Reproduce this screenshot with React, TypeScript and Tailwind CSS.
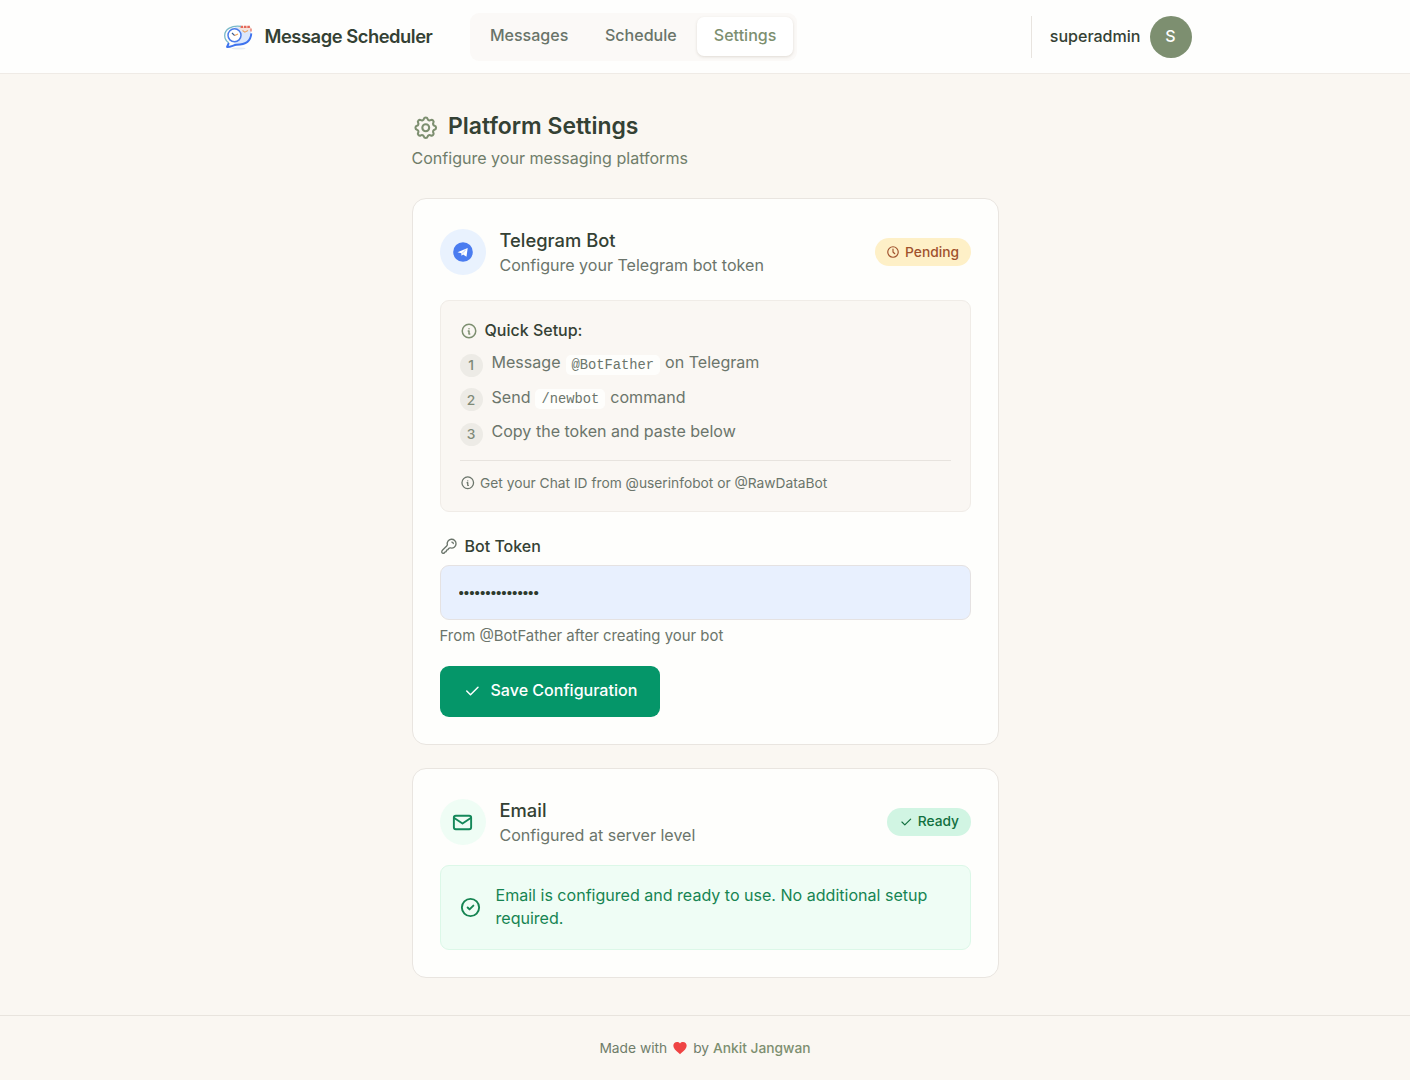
import type { ReactNode } from "react"
import {
  TbCheck,
  TbCircleCheck,
  TbClock,
  TbInfoCircle,
  TbMail,
  TbSettings,
} from "react-icons/tb"

const navItems = [
  { label: "Messages", active: false },
  { label: "Schedule", active: false },
  { label: "Settings", active: true },
]

const steps: { before: string; code?: string; after?: string }[] = [
  { before: "Message", code: "@BotFather", after: "on Telegram" },
  { before: "Send", code: "/newbot", after: "command" },
  { before: "Copy the token and paste below" },
]

function Logo() {
  return (
    <svg width="30" height="30" viewBox="0 0 30 30" fill="none" aria-hidden="true">
      <ellipse cx="15.5" cy="26.500" rx="7" ry="1" fill="#e8edf2" />
      <path
        d="M12 5h13c2.600 0 3.400 1.800 3.100 4.500l-.7 6c-.6 4.500-3.500 7.200-8 7.200h-8z"
        fill="#dbe7fc"
      />
      <path d="M15 5h13l.2 3.500H18z" fill="#f6e3dc" />
      <path d="M17.500 4.800h10" stroke="#e4695a" strokeWidth="2.200" strokeDasharray="2.600 .8" />
      <path d="M28 6.500v3" stroke="#e4695a" strokeWidth="1.200" />
      <path d="M19.500 8.500l2.300 1.700 3.200-1.700" stroke="#f0a35b" strokeWidth="1.100" />
      <path
        d="M18 4.400C8.500 3 1.700 7.500 1.700 13.400c0 3.300 1.500 5.600 4.100 7.400"
        stroke="#79b9c9"
        strokeWidth="1.300"
      />
      <path
        d="M5.800 21L4 25c4 .2 6.200-1.900 9.700-2.200 8.500 0 14-3 14.600-11.400"
        stroke="#3e73ee"
        strokeWidth="1.900"
        strokeLinejoin="round"
      />
      <circle cx="11.500" cy="13.300" r="6.500" fill="#fff" stroke="#4a7bea" strokeWidth="1.500" />
      <path d="M9 11l2.700 2.600" stroke="#3c5a8c" strokeWidth="1.200" />
      <path d="M11.700 13.600l3.300-1.600" stroke="#f0a35b" strokeWidth="1.100" />
    </svg>
  )
}

function TelegramIcon() {
  return (
    <svg width="20" height="20" viewBox="0 0 20 20" aria-hidden="true">
      <circle cx="10" cy="10" r="9.800" fill="#4a7cf0" />
      <path d="M4.500 10.200l10.200-4.300-1.200 8.800-3.400-2.200-1.600 1.300-.2-2.600z" fill="#fff" />
      <path d="M8.500 11.300l4.200-3.400-3 3.900" fill="none" stroke="#b7cbfa" strokeWidth="0.600" />
    </svg>
  )
}

function KeyIcon() {
  return (
    <svg
      viewBox="0 0 24 24"
      className="size-[18px] text-[#6b756b]"
      fill="none"
      stroke="currentColor"
      strokeWidth="1.800"
      strokeLinecap="round"
      strokeLinejoin="round"
      aria-hidden="true"
    >
      <path d="M9.800 10.400a5.900 5.900 0 1 1 4.400 4.200c-1-.2-1.900-.1-2.600.6l-1 1.600-1.700.8-.8 1.900-1.600.6-.9 1.300c-1 .6-3 .3-3.200-.8-.2-1.200 0-2.200.8-3l5.700-5.700c.6-.6.9-.9.900-1.500z" />
      <path d="M15.800 6.800c1.100 0 1.900.8 1.900 1.900" />
    </svg>
  )
}

function Header() {
  return (
    <header className="flex h-[74px] justify-center border-b border-[#efebe6] bg-[#fefefd]">
      <div className="flex w-[969px] translate-x-[2px] items-center justify-between">
        <div className="flex items-center">
          <div className="flex items-center gap-3">
            <Logo />
            <span className="text-[18.350px] font-semibold tracking-[-0.025em] text-[#344134]">
              Message Scheduler
            </span>
          </div>
          <nav className="ml-[37.500px] flex h-12 items-center gap-[4.600px] rounded-[9px] bg-[#fbf9f7] px-1">
            {navItems.map((item) => (
              <a
                key={item.label}
                href="#"
                className={
                  item.active
                    ? "flex h-[39px] items-center rounded-[7px] bg-white px-[16.500px] pb-[3px] text-[16.060px] font-medium text-[#7d8f70] shadow-[0_1px_3px_rgba(80,60,40,0.16)]"
                    : "flex h-[39px] items-center px-4 pb-[3px] text-[16.060px] font-medium text-[#697469]"
                }
              >
                {item.label}
              </a>
            ))}
          </nav>
        </div>
        <div className="flex h-[42px] items-center gap-[9px] border-l border-[#e8e4df] pl-[18px]">
          <span className="pb-px text-[16.060px] font-medium text-[#344134]">superadmin</span>
          <span className="flex size-[42px] items-center justify-center rounded-full bg-[#7d8f70] pb-px text-base font-medium text-white">
            S
          </span>
        </div>
      </div>
    </header>
  )
}

type CardHeaderProps = {
  icon: ReactNode
  title: string
  subtitle: string
  badge: ReactNode
}

function CardHeader({ icon, title, subtitle, badge }: CardHeaderProps) {
  return (
    <div className="flex h-[50px] items-center justify-between">
      <div className="flex items-center gap-3.5">
        {icon}
        <div>
          <h2 className="text-[18.350px] leading-[25px] font-medium text-[#344134]">{title}</h2>
          <p className="text-[16.060px] leading-6 text-[#6b756b]">{subtitle}</p>
        </div>
      </div>
      {badge}
    </div>
  )
}

function TelegramCard() {
  return (
    <section className="h-[547px] rounded-[14px] border border-[#e9e5e0] bg-[#fefefc] px-[27px] pt-7">
      <CardHeader
        icon={
          <span className="flex size-[46px] items-center justify-center rounded-full bg-[#e9f2fe]">
            <TelegramIcon />
          </span>
        }
        title="Telegram Bot"
        subtitle="Configure your Telegram bot token"
        badge={
          <span className="flex h-7 items-center gap-[5px] rounded-full bg-[#fef0c7] px-[11.500px] text-[13.770px] font-medium text-[#a0522d]">
            <TbClock className="size-3.5" />
            Pending
          </span>
        }
      />

      <div className="mt-[23px] h-[212px] rounded-[9px] border border-[#f0ece7] bg-[#faf7f3] px-[19px] pt-[18px]">
        <div className="flex h-6 items-center gap-[7px] text-base font-medium text-[#344134]">
          <TbInfoCircle className="size-[18px] text-[#7d8f70]" />
          <span className="pb-0.5">Quick Setup:</span>
        </div>
        <ol className="mt-2">
          {steps.map((step, i) => (
            <li key={step.before} className="flex h-[34.400px] gap-[9px]">
              <span className="mt-[3px] flex size-[23px] shrink-0 items-center justify-center rounded-full bg-[#edebe6] text-[13.770px] font-medium text-[#7f8a78]">
                {i + 1}
              </span>
              <span className="-mt-[0.700px] flex h-6 items-center gap-[5px] text-[16.060px] text-[#6b756b]">
                {step.before}
                {step.code && (
                  <code className="mt-[5px] rounded-[5px] bg-[#fefefc] px-1.5 pt-px font-['Liberation_Mono',monospace] text-[13.770px] leading-[19px]">
                    {step.code}
                  </code>
                )}
                {step.after}
              </span>
            </li>
          ))}
        </ol>
        <div className="mt-1.5 flex items-center gap-[5px] border-t border-[#e7e3de] pt-3 text-[13.770px] leading-5 text-[#6b756b]">
          <TbInfoCircle className="size-[15.500px]" />
          Get your Chat ID from @userinfobot or @RawDataBot
        </div>
      </div>

      <div className="mt-[22px] flex h-6 items-center gap-[7px] text-base font-medium text-[#344134]">
        <KeyIcon />
        <span className="pb-px">Bot Token</span>
      </div>
      <input
        type="password"
        defaultValue="123456789012345"
        aria-label="Bot Token"
        className="mt-[7px] block h-[55px] w-full rounded-[9px] border border-[#e5e2e2] bg-[#e8f0fe] px-[18px] font-['Liberation_Sans',sans-serif] text-[15.300px] text-[#2d3a2d] outline-none"
      />
      <p className="mt-[5px] text-[14.910px] leading-[22px] text-[#6b756b]">
        From @BotFather after creating your bot
      </p>
      <button className="mt-[19px] flex h-[51px] w-[220.500px] items-center rounded-[9px] bg-[#059669] pb-[3px] pl-[23px] text-[16.060px] font-medium text-white">
        <TbCheck className="mt-0.5 mr-2.5 size-[18px]" />
        Save Configuration
      </button>
    </section>
  )
}

function EmailCard() {
  return (
    <section className="mt-[23px] h-[210px] rounded-[14px] border border-[#e9e5e0] bg-[#fefefc] px-[27px] pt-7">
      <CardHeader
        icon={
          <span className="flex size-[46px] items-center justify-center rounded-full bg-[#effdf5]">
            <TbMail className="size-[23px] text-[#15885a]" />
          </span>
        }
        title="Email"
        subtitle="Configured at server level"
        badge={
          <span className="mb-px flex h-7 items-center gap-[5px] rounded-full bg-[#d1f5e3] px-[11.500px] text-[13.770px] font-medium text-[#11703f]">
            <TbCheck className="size-3.5" />
            Ready
          </span>
        }
      />
      <div className="mt-[18px] flex h-[85px] items-center gap-3.5 rounded-[9px] border border-[#dcf8e8] bg-[#effdf5] px-[18px] text-[#168452]">
        <TbCircleCheck className="size-[23px] shrink-0" />
        <p className="pb-0.5 text-[16.060px] leading-[23px]">
          Email is configured and ready to use. No additional setup required.
        </p>
      </div>
    </section>
  )
}

function Footer() {
  return (
    <footer className="mt-[37px] flex h-[65px] items-center justify-center border-t border-[#e8e4de] text-[13.770px] text-[#6f7d6a]">
      <span>Made with</span>
      <svg viewBox="0 0 24 24" className="mx-[5px] size-4" fill="#ef4444" aria-hidden="true">
        <path d="M12 21.300l-1.500-1.300C5.400 15.400 2 12.300 2 8.500 2 5.400 4.400 3 7.500 3c1.700 0 3.400.8 4.500 2.100C13.100 3.800 14.800 3 16.500 3 19.600 3 22 5.400 22 8.500c0 3.800-3.400 6.900-8.500 11.500z" />
      </svg>
      <span>
        by <span className="font-medium text-[#7d8f70]">Ankit Jangwan</span>
      </span>
    </footer>
  )
}

export default function App() {
  return (
    <div className="min-h-screen bg-[#faf7f2] font-['Inter',sans-serif]">
      <Header />
      <main className="mx-auto w-[587px] pt-9">
        <div className="flex h-8 items-center gap-[9px]">
          <TbSettings className="mt-[3px] size-[27.500px] text-[#7d8f70]" strokeWidth={1.8} />
          <h1 className="pb-px text-[22.940px] leading-8 font-semibold text-[#344134]">
            Platform Settings
          </h1>
        </div>
        <p className="mt-[4px] mb-[28px] text-[16.060px] leading-6 text-[#6f7d6a]">
          Configure your messaging platforms
        </p>
        <TelegramCard />
        <EmailCard />
      </main>
      <Footer />
    </div>
  )
}
